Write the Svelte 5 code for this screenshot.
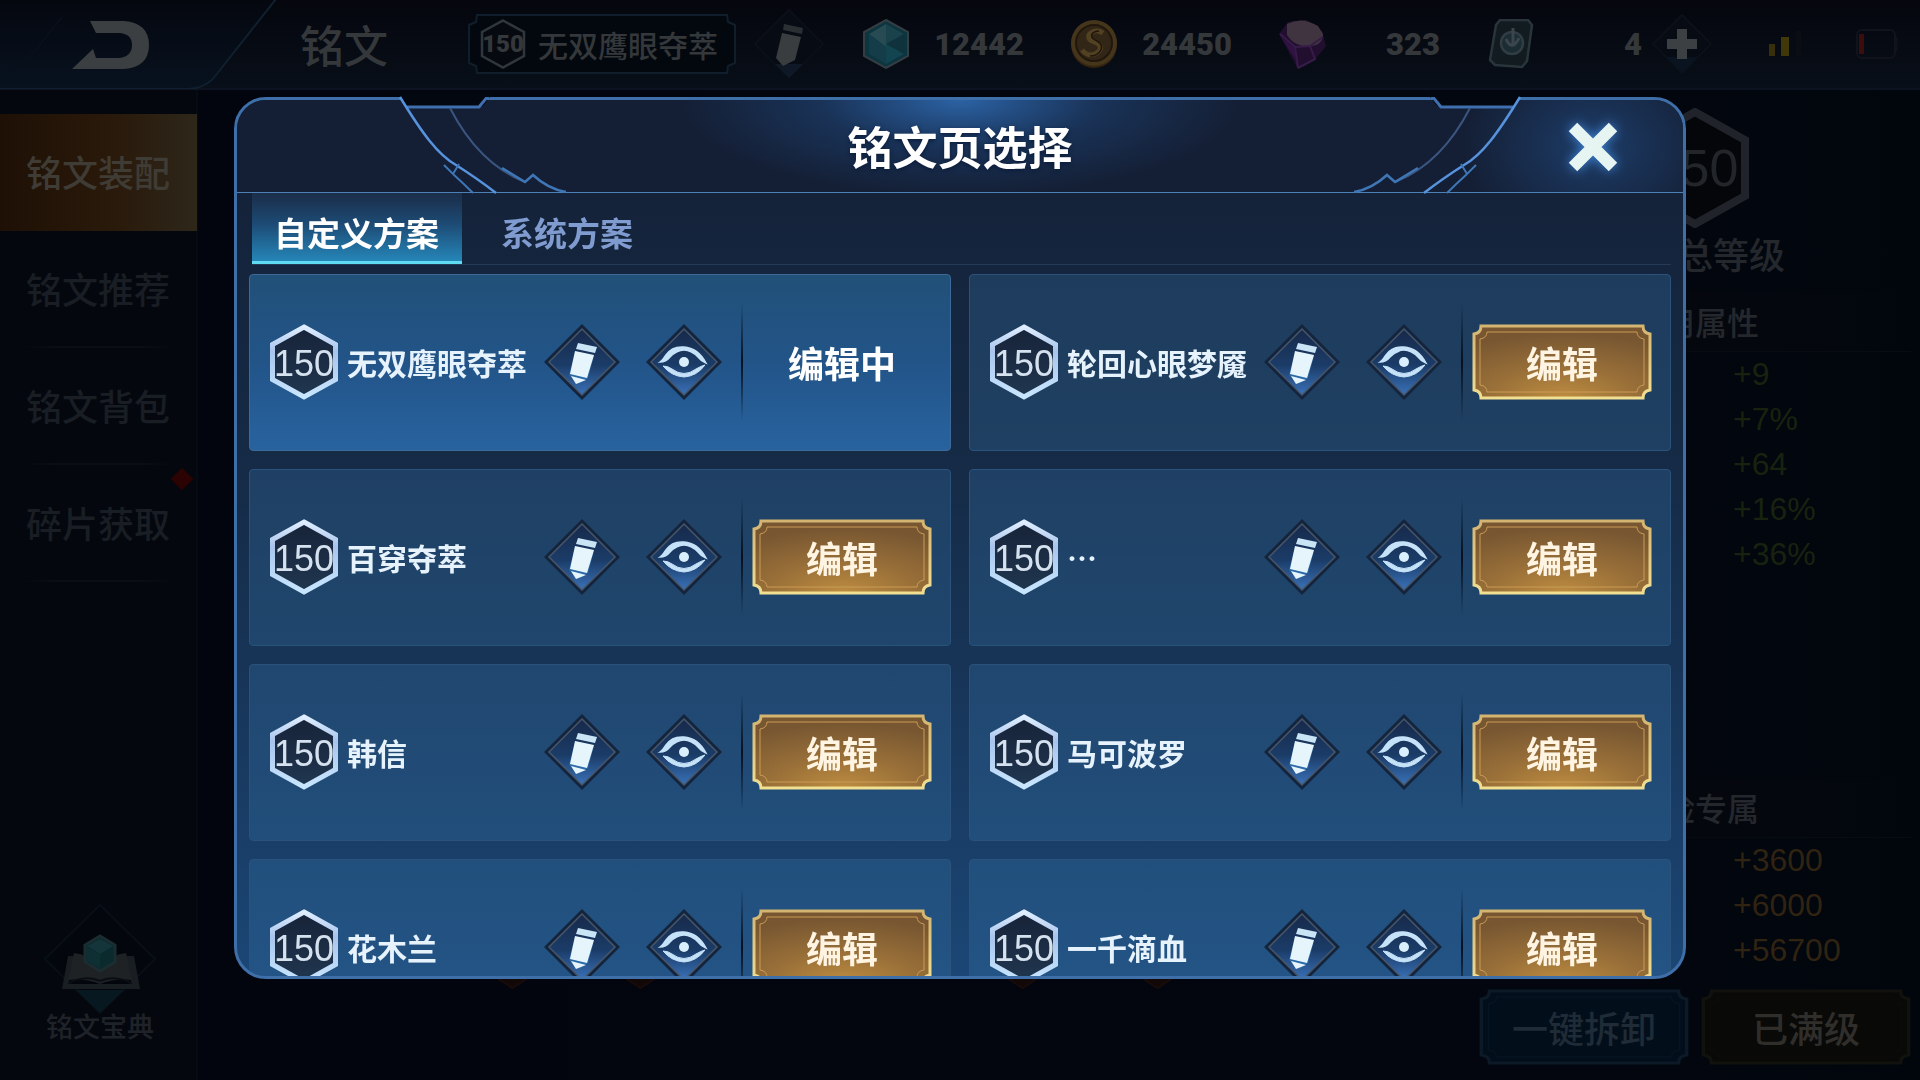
<script>
  const plans = [
    { name: '无双鹰眼夺萃', level: 150, active: true },
    { name: '轮回心眼梦魇', level: 150 },
    { name: '百穿夺萃', level: 150 },
    { name: '…', level: 150 },
    { name: '韩信', level: 150 },
    { name: '马可波罗', level: 150 },
    { name: '花木兰', level: 150 },
    { name: '一千滴血', level: 150 }
  ];
  const sections = ['铭文装配', '铭文推荐', '铭文背包', '碎片获取'];
  const bonuses = ['+9', '+7%', '+64', '+16%', '+36%'];
  const adventure = ['+3600', '+6000', '+56700'];
  const tabs = ['自定义方案', '系统方案'];
  let tab = $state(0);
</script>

{#snippet hexagon()}
  <svg class="fill" viewBox="0 0 68 76" aria-hidden="true">
    <path d="M34 3 65.500 20.500V55.500L34 73 2.500 55.500V20.500Z" fill="url(#hexFill)" stroke="url(#hexEdge)" stroke-width="5" />
  </svg>
{/snippet}

{#snippet pencil()}
  <svg class="fill" viewBox="0 0 76 76" aria-hidden="true">
    <path d="M38 0 76 38 38 76 0 38Z" fill="#14243c" />
    <path d="M38 5 71 38 38 71 5 38Z" fill="url(#diaFill)" stroke="#45566b" stroke-width="1.500" />
    <path d="M34 19 53 23 51 29 32 25Z" fill="#c9e4f5" />
    <path d="M31 28 50 32 44 54 34 60 25 51Z" fill="#2f7fc4" opacity=".55" />
    <path d="M31 27 50 31 43 54 26 50Z" fill="#e6f5fb" />
    <path d="M27 52 42 56 32 60Z" fill="#e6f5fb" />
  </svg>
{/snippet}

{#snippet eye()}
  <svg class="fill" viewBox="0 0 76 76" aria-hidden="true">
    <path d="M38 0 76 38 38 76 0 38Z" fill="#14243c" />
    <path d="M38 5 71 38 38 71 5 38Z" fill="url(#diaFill)" stroke="#45566b" stroke-width="1.500" />
    <path d="M14 38Q20 38 24 33 38 19 52 33 55 37 60 39 52 24 38 23 26 22 20 31 17 36 14 38Z" fill="#c5e2f8" stroke="#c5e2f8" stroke-width="1.500" />
    <path d="M17 42Q22 42 26 45 38 54 50 45 55 42 59 41 51 52 38 53 25 52 17 42Z" fill="#c5e2f8" stroke="#c5e2f8" />
    <circle cx="38" cy="38" r="5" fill="#d9effc" />
  </svg>
{/snippet}

{#snippet plate()}
  <svg class="fill" viewBox="0 0 180 76" preserveAspectRatio="none" aria-hidden="true">
    <path class="plate-edge" d="M9 2H171Q171 9 178 10V66Q171 67 171 74H9Q9 67 2 66V10Q9 9 9 2Z" />
    <path class="plate-line" d="M15 8H165Q165 14 172 15V61Q165 62 165 68H15Q15 62 8 61V15Q15 14 15 8Z" />
  </svg>
{/snippet}

{#snippet corner()}
  <path d="M14 -4H109L99 9H21Z" fill="#03070f" />
  <path d="M105 1.500H102L95 10H23" fill="none" stroke="#3f6fae" stroke-width="3" />
  <path d="M16 0C38 36 54 58 72 68Q94 82 112 96" fill="none" stroke="#5792dd" stroke-width="2.500" />
  <path d="M60 68 69 77 75 67M69 77Q80 87 89 96" fill="none" stroke="#3f76b5" stroke-width="2" />
  <path d="M66 11C84 46 108 72 141 85" fill="none" stroke="#3a5580" stroke-width="2" />
  <path d="M118 71 141 85 149 78Q164 92 182 95" fill="none" stroke="#3f76b5" stroke-width="2.500" />
{/snippet}

<svg class="defs" aria-hidden="true">
  <defs>
    <linearGradient id="hexEdge" x1="0" y1="0" x2="0" y2="1">
      <stop offset="0" stop-color="#dfeeff" /><stop offset=".35" stop-color="#a9c4ec" /><stop offset="1" stop-color="#c8e6ff" />
    </linearGradient>
    <linearGradient id="hexFill" x1="0" y1="0" x2="0" y2="1">
      <stop offset="0" stop-color="#172338" /><stop offset="1" stop-color="#203650" />
    </linearGradient>
    <linearGradient id="diaFill" x1="0" y1="0" x2="0" y2="1">
      <stop offset="0" stop-color="#17294a" /><stop offset=".55" stop-color="#1b3c68" /><stop offset="1" stop-color="#3a72ba" />
    </linearGradient>
    <radialGradient id="goldFill" cx=".5" cy="1" r=".9">
      <stop offset="0" stop-color="#bd8c40" /><stop offset=".5" stop-color="#976e38" /><stop offset="1" stop-color="#775631" />
    </radialGradient>
    <linearGradient id="goldEdge" x1="0" y1="0" x2="0" y2="1">
      <stop offset="0" stop-color="#d3b471" /><stop offset="1" stop-color="#f1df92" />
    </linearGradient>
    <linearGradient id="backFill" x1="0" y1="0" x2="0" y2="1">
      <stop offset="0" stop-color="#05070f" /><stop offset="1" stop-color="#07121f" />
    </linearGradient>
  </defs>
</svg>

<div class="page" lang="zh-CN">
  <header class="topbar">
    <button class="back" aria-label="返回">
      <svg viewBox="0 0 280 90" aria-hidden="true">
        <path d="M0 0H276L216 76Q206 90 186 90H0Z" fill="url(#backFill)" />
        <path d="M276 0 216 76Q206 90 186 90H0" fill="none" stroke="#10202f" stroke-width="2" />
        <path d="M0 74Q20 70 38 48L62 18" fill="none" stroke="#08101a" stroke-width="2" />
        <path d="M90 22H124Q149 24 149 46T124 70H72L93 50 96 59H120Q132 57 132 46T120 34H96Z" fill="#3c3f42" />
      </svg>
    </button>
    <h1>铭文</h1>
    <div class="current">
      <svg class="fill" viewBox="0 0 268 60" preserveAspectRatio="none" aria-hidden="true">
        <path d="M9 1H259L260 8 267 11V49L260 52 259 59H9L8 52 1 49V11L8 8Z" fill="#03080e" stroke="#101d2a" stroke-width="2" />
      </svg>
      <span class="mini-hex">
        <svg class="fill" viewBox="0 0 46 50" aria-hidden="true"><path d="M23 1.500 44 13V37L23 48.500 2 37V13Z" fill="#060a10" stroke="#30363d" stroke-width="2.500" /></svg>
        <b>150</b>
      </span>
      <span class="current-name">无双鹰眼夺萃</span>
    </div>
    <button class="rename" aria-label="重命名">
      <svg viewBox="0 0 72 72" aria-hidden="true">
        <path d="M36 2 70 36 36 70 2 36Z" fill="#070b13" stroke="#0b1018" stroke-width="2" />
        <path d="M22 56 36 70 50 56Z" fill="#0e1826" />
        <path d="M31 16 50 20 49 26 30 22Z" fill="#2a2f34" />
        <path d="M29 25 48 29 42 52 30 58 23 50Z" fill="#393d40" />
      </svg>
    </button>
    <ul class="wallet">
      <li>
        <svg viewBox="0 0 48 50" aria-hidden="true">
          <path d="M24 1 46 13V37L24 49 2 37V13Z" fill="#0c3540" stroke="#343e42" stroke-width="2" />
          <path d="M24 5 7 15 24 28Z" fill="#284a52" /><path d="M24 5 42 15 24 28Z" fill="#1a424c" /><path d="M42 15V35L24 25Z" fill="#10323c" /><path d="M7 15 24 28V45L7 35Z" fill="#143d49" /><path d="M24 25 42 35 24 45Z" fill="#12454f" />
        </svg>
        <b>12442</b>
      </li>
      <li>
        <svg viewBox="0 0 48 50" aria-hidden="true">
          <circle cx="24" cy="26" r="23" fill="#33230f" /><circle cx="24" cy="24" r="23" fill="#44351b" /><circle cx="24" cy="24" r="18" fill="#322616" stroke="#21170c" stroke-width="2" />
          <path d="M33 14C24 8 13 17 22 22 31 25 33 29 27 34 22 37 16 36 12 31" fill="none" stroke="#524123" stroke-width="5" />
          <path d="M29 12C19 13 20 19 27 22 36 27 30 37 20 37" fill="none" stroke="#20160b" stroke-width="1.500" />
        </svg>
        <b>24450</b>
      </li>
      <li>
        <svg viewBox="0 0 48 50" aria-hidden="true">
          <path d="M1 15 10 3 28 1 44 12 48 27 36 42 20 50Z" fill="#220f2f" />
          <path d="M9 5Q24-3 40 7L45 15Q45 26 33 27 17 29 9 16Z" fill="#3f343f" />
          <path d="M2 15 17 28 20 49M17 28 32 27 45 18M32 27 37 40 20 49" fill="none" stroke="#371b49" stroke-width="2" />
          <path d="M3 18 16 29 19 43Z" fill="#301343" />
        </svg>
        <b>323</b>
      </li>
      <li class="short">
        <svg viewBox="0 0 48 50" aria-hidden="true">
          <path d="M14 1H42L46 6 41 42 36 48 9 46 4 41 10 6Z" fill="#121b20" stroke="#29353a" stroke-width="2.500" />
          <circle cx="26" cy="24" r="11" fill="#1c2c33" stroke="#303d43" stroke-width="2.500" />
          <path d="M27 9V26M20 20Q26 33 33 19" fill="none" stroke="#3a464b" stroke-width="3" />
        </svg>
        <b>4</b>
      </li>
    </ul>
    <button class="plus" aria-label="增加">
      <svg viewBox="0 0 60 60" aria-hidden="true">
        <path d="M30 1 59 30 30 59 1 30Z" fill="#070b13" stroke="#0c1118" stroke-width="2" />
        <path d="M14 43H46L30 59Z" fill="#0a1421" />
        <path d="M25 15H35V25H45V35H35V45H25V35H15V25H25Z" fill="#3d4043" />
      </svg>
    </button>
    <div class="status">
      <svg width="34" height="28" viewBox="0 0 34 28" role="img" aria-label="信号"><path d="M1 14H7V26H1Z" fill="#38300a" /><path d="M13 7H21V26H13Z" fill="#403808" /><path d="M28 1H33V26H28Z" fill="#0a0d14" /></svg>
      <svg width="42" height="30" viewBox="0 0 42 30" role="img" aria-label="电量"><rect x="1" y="1" width="38" height="28" rx="5" fill="none" stroke="#12131a" stroke-width="2" /><path d="M3 5H8V25H3Z" fill="#3b0d0c" /><path d="M40 8V22" stroke="#12131a" stroke-width="3" /></svg>
    </div>
  </header>

  <main>
    <nav class="sidebar">
      {#each sections as label, i}
        <button class="section" class:selected={i === 0}>
          {label}
          {#if i === 3}<i class="alert"></i>{/if}
        </button>
      {/each}
      <button class="codex">
        <svg width="112" height="110" viewBox="0 0 112 110" aria-hidden="true">
          <path d="M56 1 111 55 56 109 1 55Z" fill="#03060d" stroke="#080f17" stroke-width="2" />
          <path d="M32 86H80L56 109Z" fill="#081820" />
          <path d="M24 52H32L24 80H88L80 52H90L96 85H18Z" fill="#181e22" />
          <path d="M30 49Q44 50 56 63 68 50 82 49L88 76Q70 74 56 80 42 74 24 76Z" fill="#1e2225" />
          <path d="M26 78Q44 71 56 77 68 71 86 78" fill="none" stroke="#0a0f14" stroke-width="2" />
          <path d="M56 32 71 41V58L56 67 41 58V41Z" fill="#0b2a2e" stroke="#1c2d31" stroke-width="3" />
          <path d="M56 35 69 42 56 50 43 42Z" fill="#14363a" /><path d="M56 50V64L43 57V43Z" fill="#0e2f33" />
        </svg>
        <span>铭文宝典</span>
      </button>
    </nav>

    <div class="board">
      <svg viewBox="0 0 1280 12" aria-hidden="true">
        <path d="M300 0 314 9 328 0M428 0 442 9 456 0M810 0 824 9 838 0M945 0 959 9 973 0" fill="#120807" stroke="#180c0a" stroke-width="2" />
      </svg>
    </div>

    <aside>
      <div class="rank">
        <svg class="fill" viewBox="0 0 108 120" aria-hidden="true"><path d="M54 4 104 32V88L54 116 4 88V32Z" fill="#040609" stroke="#20242a" stroke-width="8" /></svg>
        <span>150</span>
      </div>
      <p class="rank-label">铭文总等级</p>
      <h2>应用属性</h2>
      <ul class="values">
        {#each bonuses as value}<li>{value}</li>{/each}
      </ul>
      <h2 class="lower">冒险专属</h2>
      <ul class="values amber">
        {#each adventure as value}<li>{value}</li>{/each}
      </ul>
      <div class="actions">
        <button class="plated dim-blue">{@render plate()}<span>一键拆卸</span></button>
        <button class="plated dim-gold">{@render plate()}<span>已满级</span></button>
      </div>
    </aside>
  </main>
</div>

<div class="overlay" lang="zh-CN">
  <div class="dialog" role="dialog" aria-modal="true" aria-labelledby="dialog-title">
    <header class="dialog-head">
      <svg class="trim" viewBox="0 0 190 96" aria-hidden="true">{@render corner()}</svg>
      <svg class="trim mirrored" viewBox="0 0 190 96" aria-hidden="true">{@render corner()}</svg>
      <h2 id="dialog-title">铭文页选择</h2>
      <button class="close" aria-label="关闭">
        <svg width="56" height="56" viewBox="0 0 56 56" aria-hidden="true"><path d="M8 9 48 49M48 9 8 49" stroke="#e6f4f2" stroke-width="12" /></svg>
      </button>
    </header>
    <div class="tabs" role="tablist">
      {#each tabs as label, i}
        <button role="tab" aria-selected={tab === i} class:current-tab={tab === i} onclick={() => (tab = i)}>{label}</button>
      {/each}
    </div>
    <div class="plans">
      {#each plans as plan}
        <article class="plan" class:editing={plan.active}>
          <span class="level">{@render hexagon()}<span>{plan.level}</span></span>
          <span class="name">{plan.name}</span>
          <button class="icon" aria-label="重命名">{@render pencil()}</button>
          <button class="icon" aria-label="查看">{@render eye()}</button>
          <i class="rule"></i>
          {#if plan.active}
            <span class="state">编辑中</span>
          {:else}
            <button class="plated gold">{@render plate()}<span>编辑</span></button>
          {/if}
        </article>
      {/each}
    </div>
  </div>
</div>

<style>
  :global(body) {
    background: #03070f;
  }
  .page,
  .overlay {
    font-family: 'Noto Sans CJK SC', sans-serif;
  }
  .overlay {
    font-weight: 700;
  }
  .defs {
    position: absolute;
    width: 0;
    height: 0;
  }
  button {
    border: 0;
    padding: 0;
    background: none;
    color: inherit;
    font: inherit;
    cursor: pointer;
  }
  h1,
  h2,
  p,
  ul {
    margin: 0;
    padding: 0;
    font-weight: inherit;
    list-style: none;
  }
  .fill {
    position: absolute;
    inset: 0;
    width: 100%;
    height: 100%;
  }
  .page {
    display: flex;
    flex-direction: column;
    min-height: 100vh;
    overflow: hidden;
    background: linear-gradient(90deg, #04080e 0, #04080e 196px, #03050e 198px, #03060e 85%, #01060d 100%);
    color: #24282d;
    font-weight: 500;
  }
  .topbar {
    display: flex;
    align-items: center;
    height: 88px;
    border-bottom: 2px solid #0d1320;
    background: linear-gradient(#05060e, #080f18);
    color: #35383b;
  }
  .topbar svg {
    display: block;
  }
  .back {
    width: 280px;
    height: 90px;
  }
  h1 {
    margin-left: 20px;
    font-size: 44px;
    line-height: 60px;
    white-space: nowrap;
  }
  .current {
    position: relative;
    display: flex;
    align-items: center;
    gap: 12px;
    box-sizing: border-box;
    height: 60px;
    margin-left: 80px;
    padding: 0 18px 0 12px;
    font-size: 30px;
    white-space: nowrap;
  }
  .mini-hex {
    position: relative;
    display: grid;
    place-items: center;
    width: 46px;
    height: 50px;
    font: 700 24px Roboto, sans-serif;
  }
  .mini-hex b,
  .current-name {
    position: relative;
  }
  .rename {
    width: 72px;
    height: 72px;
    margin-left: 17px;
  }
  .wallet {
    display: flex;
    gap: 46px;
    margin-left: 37px;
    font: 700 31px Roboto, sans-serif;
  }
  .wallet li {
    display: flex;
    align-items: center;
    justify-content: space-between;
    width: 162px;
  }
  .wallet .short {
    width: 156px;
  }
  .wallet svg {
    width: 48px;
    height: 50px;
  }
  .plus {
    width: 60px;
    height: 60px;
    margin-left: 10px;
  }
  .status {
    display: flex;
    align-items: center;
    gap: 54px;
    margin-left: auto;
    padding-right: 22px;
  }
  main {
    display: flex;
    flex: 1;
    justify-content: space-between;
  }
  .sidebar {
    display: flex;
    flex-direction: column;
    align-items: center;
    width: 196px;
    padding: 24px 0 38px;
    border-right: 2px solid #050b13;
  }
  .section {
    position: relative;
    width: 100%;
    height: 117px;
    padding-bottom: 4px;
    background: linear-gradient(90deg, transparent 12%, #090f13 30%, #090f13 70%, transparent 88%) bottom / 100% 2px no-repeat;
    color: #191d24;
    font-size: 36px;
  }
  .selected {
    width: calc(100% + 2px);
    background: linear-gradient(90deg, #1e1005, #2a1a0b 60%, #2d271a);
    color: #3f3b35;
  }
  .alert {
    position: absolute;
    top: 6px;
    right: 6px;
    width: 16px;
    height: 16px;
    background: #2b0302;
    transform: rotate(45deg);
  }
  .codex {
    display: flex;
    flex-direction: column;
    align-items: center;
    margin-top: auto;
    padding-left: 4px;
    color: #1f2329;
    font-size: 27px;
    line-height: 32px;
  }
  .codex span {
    margin-top: -4px;
  }
  .board {
    display: flex;
    flex: 1;
    align-items: flex-end;
    padding-bottom: 89px;
  }
  .board svg {
    width: 100%;
  }
  aside {
    display: flex;
    flex-direction: column;
    width: 432px;
    padding: 18px 9px 15px 0;
  }
  .rank {
    position: relative;
    align-self: center;
    display: grid;
    place-items: center;
    width: 108px;
    height: 120px;
    color: #22262b;
    font: 52px 'Liberation Sans', sans-serif;
  }
  .rank span {
    position: relative;
  }
  .rank-label {
    margin: 0 0 14px;
    font-size: 36px;
    line-height: 50px;
    text-align: center;
  }
  aside h2 {
    border-bottom: 1px solid #080b11;
    background: linear-gradient(90deg, #04070c, #05070e 60%, #01060d);
    font-size: 32px;
    line-height: 59px;
    text-align: center;
  }
  .lower {
    margin-top: auto;
  }
  .values {
    padding-left: 254px;
    color: #17230f;
    font: 32px/45px 'Liberation Sans', sans-serif;
  }
  .amber {
    color: #302312;
  }
  .actions {
    display: grid;
    grid-template-columns: 1fr 1fr;
    gap: 12px;
    margin-top: 16px;
  }
  .plated {
    position: relative;
    height: 76px;
    font-size: 36px;
    white-space: nowrap;
  }
  .plated span {
    position: relative;
  }
  .plate-edge {
    stroke-width: 3;
  }
  .plate-line {
    fill: none;
    stroke-width: 1;
  }
  .dim-blue {
    color: #1f2b36;
  }
  .dim-blue .plate-edge {
    fill: #030e1b;
    stroke: #0b1a26;
  }
  .dim-blue .plate-line {
    stroke: #071624;
  }
  .dim-gold {
    color: #302e2b;
  }
  .dim-gold .plate-edge {
    fill: #090908;
    stroke: #11110e;
  }
  .dim-gold .plate-line {
    stroke: #0e0d0b;
  }
  .overlay {
    position: fixed;
    inset: 0;
    display: flex;
    padding: 97px 234px 101px;
  }
  .dialog {
    display: flex;
    flex: 1;
    flex-direction: column;
    min-width: 0;
    border: 3px solid #3f6fa9;
    border-radius: 32px;
    background: linear-gradient(#14233a 12%, #152a45 40%, #173457 65%, #1b4675 100%);
    color: #fff;
  }
  .dialog-head {
    position: relative;
    display: grid;
    grid-template-columns: 1fr auto 1fr;
    align-items: center;
    height: 92px;
    border-bottom: 1px solid #4d80b5;
    border-radius: 29px 29px 0 0;
    background:
      radial-gradient(ellipse 280px 96px at 50% 0, #2b62a4, #1e457880 50%, transparent),
      radial-gradient(ellipse 130px 100px at calc(100% - 90px) 50%, #1d3c68, transparent),
      #141f35;
  }
  .trim {
    position: absolute;
    top: -3px;
    left: 147px;
    width: 190px;
    height: 96px;
    overflow: visible;
  }
  .mirrored {
    right: 147px;
    left: auto;
    transform: scaleX(-1);
  }
  .dialog-head h2 {
    position: relative;
    grid-column: 2;
    font-size: 45px;
    line-height: 60px;
    text-shadow: 0 2px 4px #0b1d3a;
  }
  .close {
    justify-self: end;
    width: 100px;
    height: 80px;
    margin-right: 40px;
    filter: drop-shadow(0 0 6px #3f86d8);
  }
  .close svg {
    display: block;
    margin: 0 auto;
  }
  .tabs {
    display: flex;
    height: 71px;
    margin: 0 12px 0 15px;
    border-bottom: 1px solid #253a56;
  }
  .tabs button {
    padding: 10px 23px 0 22px;
    border-bottom: 3px solid transparent;
    color: #7f9bd0;
    font-size: 33px;
    line-height: 48px;
  }
  .tabs .current-tab {
    border-bottom-color: #5fdcf2;
    background: linear-gradient(#1b304d 5%, #1d4a74 45%, #2586b8);
    color: #fff;
  }
  .tabs button + button {
    margin-left: 17px;
  }
  .plans {
    display: grid;
    flex: 1;
    grid-template-columns: 1fr 1fr;
    grid-auto-rows: max-content;
    gap: 18px;
    min-height: 0;
    padding: 9px 12px 18px;
    overflow-y: auto;
    border-radius: 0 0 29px 29px;
    scrollbar-width: none;
  }
  .plan {
    display: flex;
    align-items: center;
    padding: 49px 18px 50px 20px;
    border: 1px solid #2b527a;
    border-radius: 4px;
    background: #3778af48;
  }
  .editing {
    border-color: #3d6a99;
    background: linear-gradient(#215078, #225488 50%, #28639f);
  }
  .level {
    position: relative;
    display: grid;
    flex: none;
    place-items: center;
    box-sizing: border-box;
    width: 68px;
    height: 76px;
    margin-right: 9px;
    padding-top: 4px;
    color: #d5e1ee;
    font: 36px 'Liberation Sans', sans-serif;
  }
  .level span {
    position: relative;
  }
  .name {
    flex: 1;
    color: #e6f2fc;
    font-size: 30px;
    line-height: 40px;
    white-space: nowrap;
  }
  .icon {
    position: relative;
    flex: none;
    width: 76px;
    height: 76px;
  }
  .icon + .icon {
    margin-left: 26px;
  }
  .rule {
    width: 2px;
    height: 118px;
    margin: -21px 9px -21px 19px;
    background: linear-gradient(transparent, #06101f 50%, transparent);
  }
  .state,
  .gold {
    flex: none;
    width: 180px;
    font-size: 36px;
    text-align: center;
  }
  .gold {
    color: #fff4e2;
  }
  .gold .plate-edge {
    fill: url(#goldFill);
    stroke: url(#goldEdge);
  }
  .gold .plate-line {
    stroke: #c99b55;
  }
</style>
